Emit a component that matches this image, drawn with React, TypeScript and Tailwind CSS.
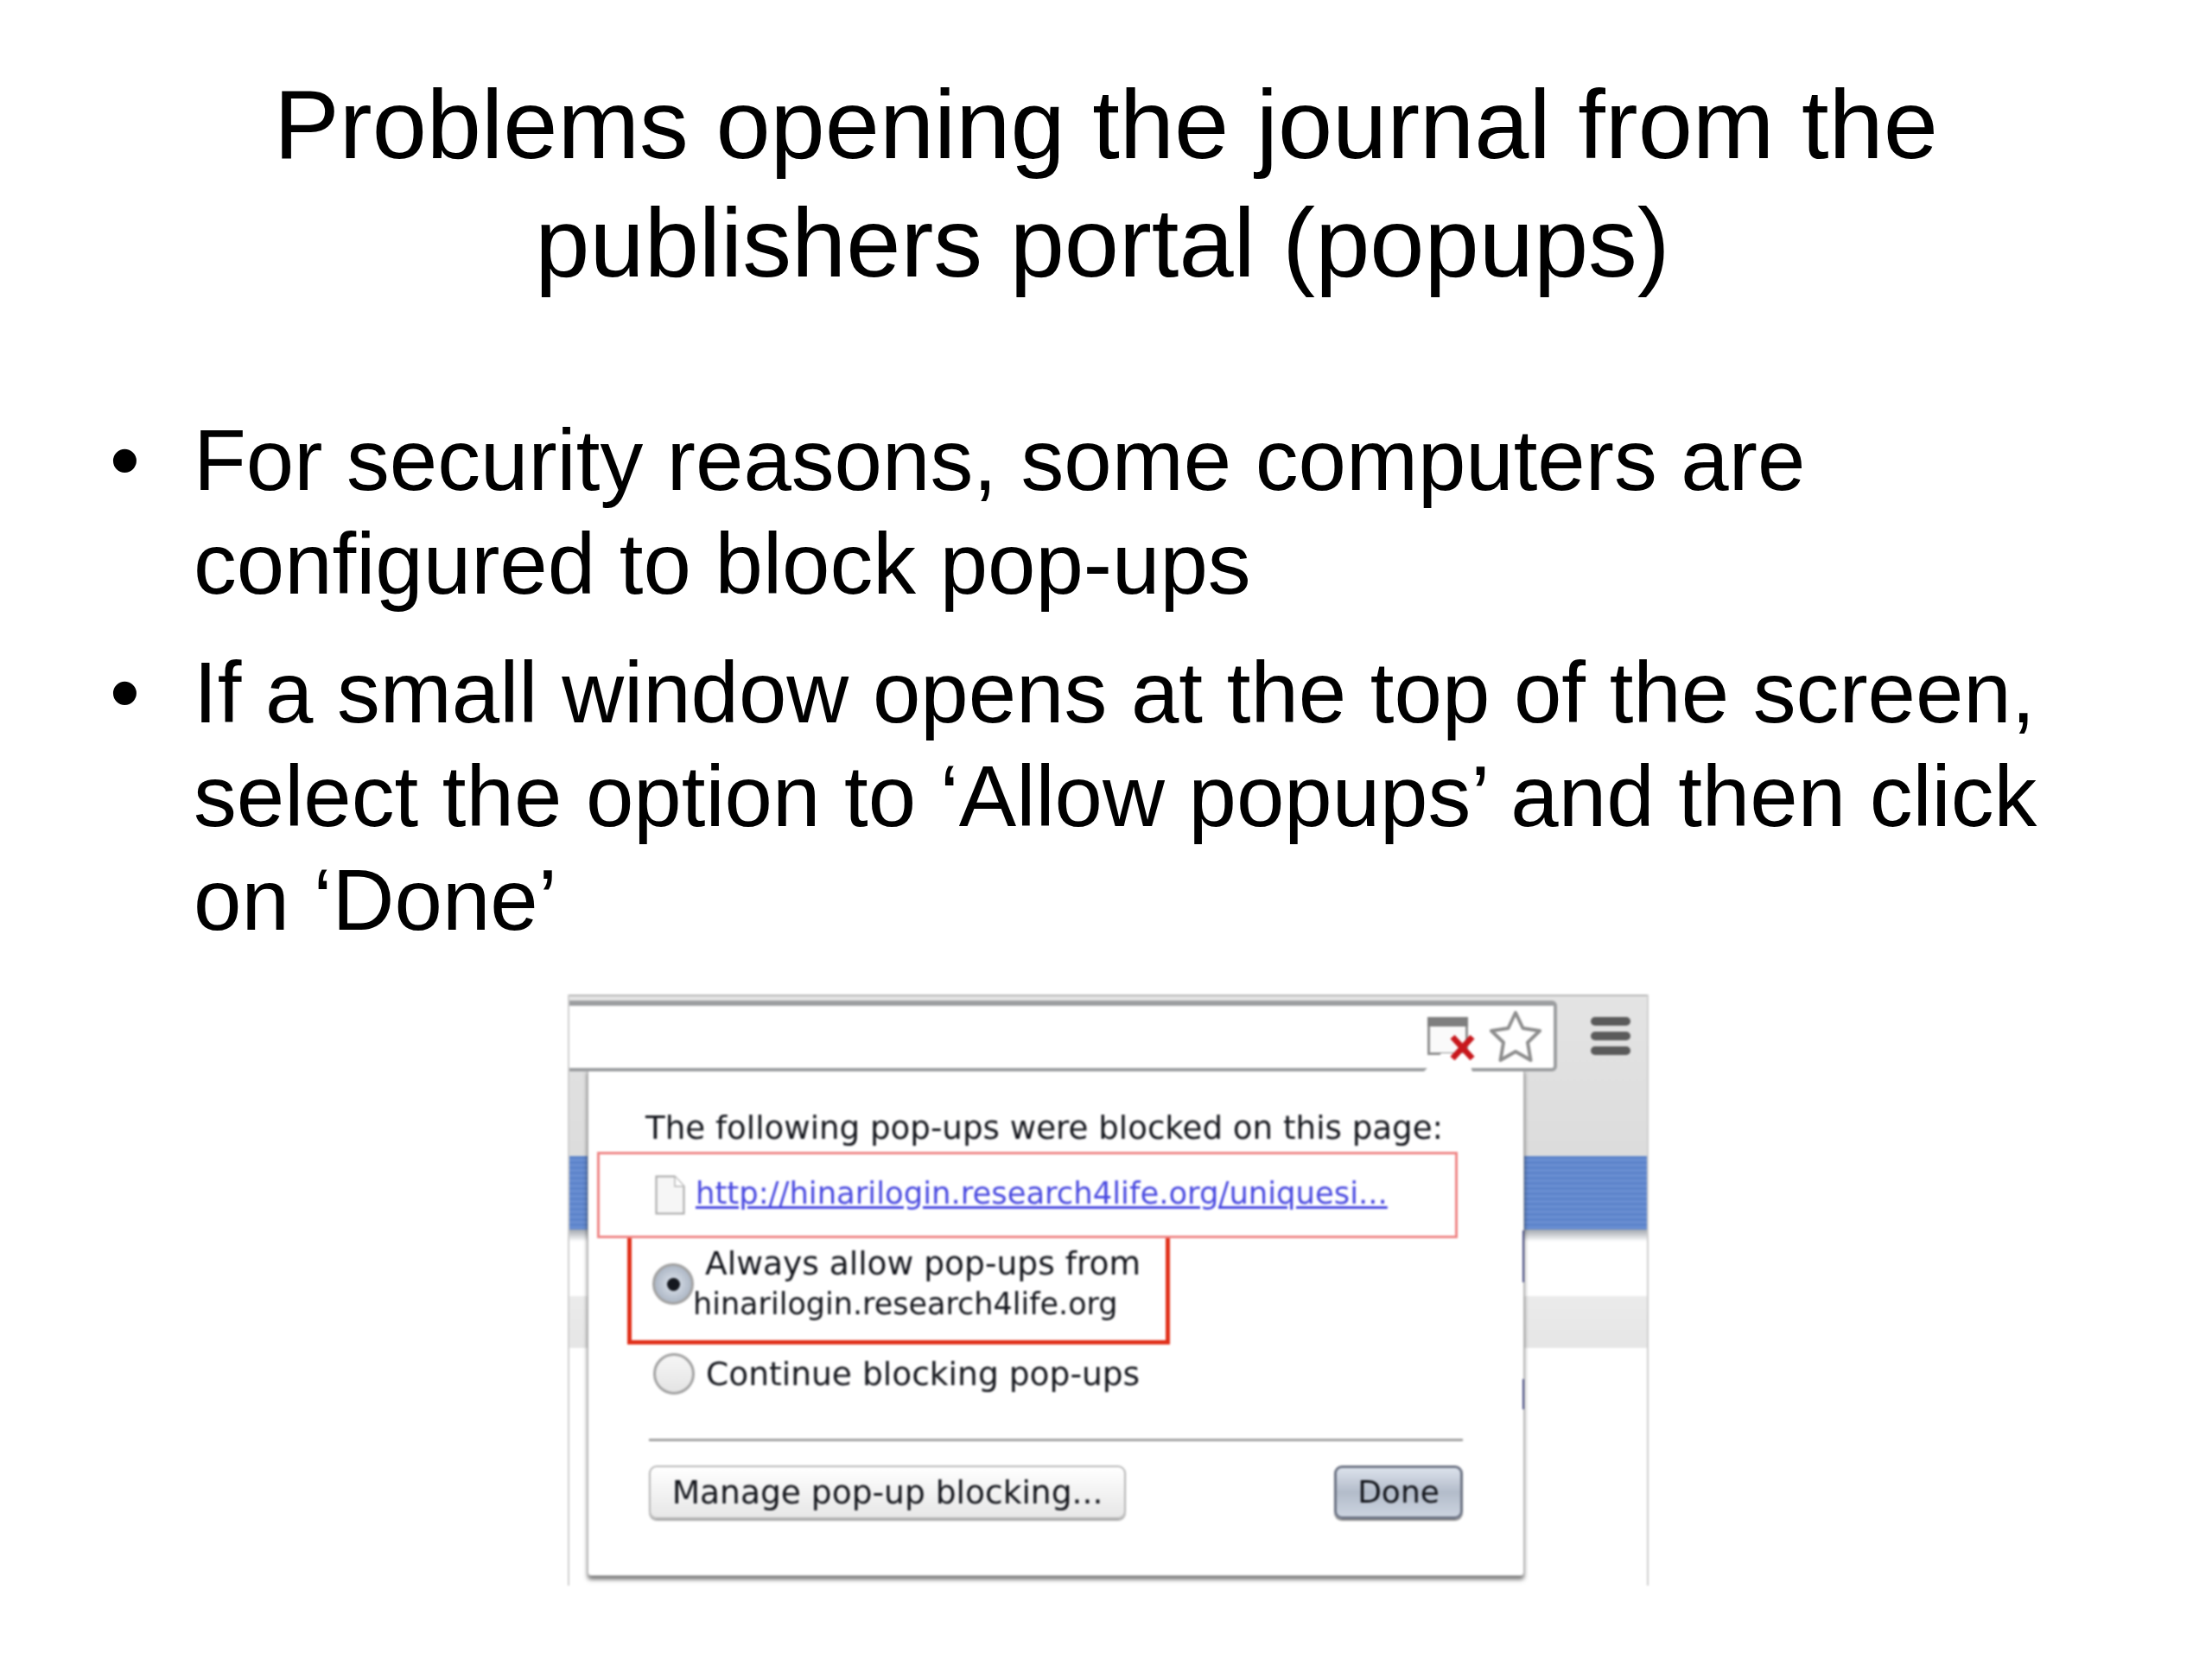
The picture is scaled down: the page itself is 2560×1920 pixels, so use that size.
const sans = 'font-["Liberation_Sans",Arial,sans-serif]';
const ui = 'font-["DejaVu_Sans",sans-serif]';

const BlockedIcon = () => (
  <svg width="47" height="44" viewBox="0 0 47 44" className="overflow-visible">
    <rect x="1.5" y="1.5" width="44" height="41" fill="#fafafa" stroke="#8f8f8f" strokeWidth="3" />
    <rect x="0" y="0" width="47" height="11" fill="#7f7f7f" />
    <polygon points="-4,63 16,42 44,42 52,63" fill="#ffffff" />
    <path d="M29 23 L52 48 M52 23 L29 48" stroke="#c8171c" strokeWidth="7" />
  </svg>
);

const StarIcon = () => (
  <svg width="60" height="60" viewBox="0 0 60 60" className="-mt-[7px]">
    <polygon
      points="30,2 38.5,20 58,23 44,36.5 47.5,57 30,47 12.5,57 16,36.5 2,23 21.5,20"
      fill="#ffffff"
      stroke="#8d8d8d"
      strokeWidth="4"
      strokeLinejoin="round"
    />
  </svg>
);

const DocIcon = () => (
  <svg width="35" height="46" viewBox="0 0 35 46" className="shrink-0">
    <path d="M1.5 1.5 H23 L33.5 13 V44.5 H1.5 Z" fill="#f6f6f6" stroke="#a8a8a8" strokeWidth="2" />
    <path d="M23 1.5 V13 H33.5" fill="#ffffff" stroke="#b8b8b8" strokeWidth="1.5" />
  </svg>
);

const Radio = ({ checked }: { checked?: boolean }) => (
  <div
    className={`w-[48px] h-[48px] rounded-full border-[3px] border-[#a3a3a3] shrink-0 flex items-center justify-center ${
      checked
        ? 'bg-[radial-gradient(circle,#dfe5ee_0%,#aeb8c6_70%,#8d97a6_100%)]'
        : 'bg-linear-to-b from-[#f6f6f6] to-[#e4e4e4]'
    }`}
  >
    {checked && <div className="w-[15px] h-[15px] rounded-full bg-[#15181f]" />}
  </div>
);

const Popup = () => (
  <div
    className={`absolute left-[21px] top-[86px] w-[1084px] h-[587px] bg-white border border-[#b5b5b5] rounded-b-[4px] shadow-[0_4px_5px_rgba(0,0,0,0.55)] px-[70px] pt-[47px] text-[#14161c] ${ui}`}
  >
    <div className="absolute -right-px top-[186px] w-[2px] h-[60px] bg-[#4a4f86]" />
    <div className="absolute -right-px top-[358px] w-[2px] h-[35px] bg-[#4a4f86]" />
    <div className="h-[40px] text-[37.2px] leading-[40px] -ml-[4px] whitespace-nowrap">
      The following pop-ups were blocked on this page:
    </div>
    <div className="relative z-10 mt-[8px] -ml-[60px] w-[996px] h-[100px] bg-white border-[3px] border-[#ef8686] flex items-center pl-[64px] pr-4 gap-[12px]">
      <DocIcon />
      <a className="-mt-[5px] text-[35.4px] leading-[40px] text-[#4a4ae0] underline underline-offset-[3px] whitespace-nowrap">
        http://hinarilogin.research4life.org/uniquesi...
      </a>
    </div>
    <div className="-mt-[5px] -ml-[25px] w-[628px] h-[128px] border-[5px] border-[#e1301a] flex items-center pl-[24px] pb-[12px]">
      <Radio checked />
      <div className="text-[37.6px] leading-[47px] whitespace-nowrap">
        <div className="pl-[13px]">Always allow pop-ups from</div>
        <div className="-ml-px text-[35px]">hinarilogin.research4life.org</div>
      </div>
    </div>
    <div className="mt-[10px] ml-[5px] h-[48px] flex items-center gap-[13px] text-[37.6px] whitespace-nowrap">
      <Radio />
      <span>Continue blocking pop-ups</span>
    </div>
    <div className="mt-[51px] h-[3px] bg-[#a2a2a2]" />
    <div className="mt-[28px] flex justify-between">
      <button className="w-[552px] h-[62px] rounded-[9px] border-2 border-[#b9b9b9] shadow-[0_2px_1px_#a8a8a8] bg-linear-to-b from-white to-[#e7e7e7] text-[37.6px] text-[#14161c] whitespace-nowrap">
        Manage pop-up blocking...
      </button>
      <button className="w-[149px] h-[62px] rounded-[9px] border-[3px] border-[#6f7686] shadow-[0_2px_1px_#8a8a8a] bg-linear-to-b from-[#dce2ec] via-[#b3bcca] to-[#ccd4e0] text-[36px] text-[#14161c]">
        Done
      </button>
    </div>
  </div>
);

const BrowserShot = () => (
  <div className="relative ml-[657px] mt-[49px] w-[1251px] h-[684px] border-x-2 border-[#cfcfcf] overflow-visible blur-[0.9px]">
    <div className="h-[187px] border-t-2 border-[#b8b8b8] bg-linear-to-b from-[#e4e4e4] to-[#dcdcdc] flex items-start">
      <div className="relative z-20 mt-[5px] w-[1143px] h-[82px] bg-white border-t-[6px] border-b-[4px] border-r-[4px] border-[#9c9ea0] rounded-r-[6px] flex items-start justify-end pt-[13px] pr-[14px] gap-[25px]">
        <BlockedIcon />
        <StarIcon />
      </div>
      <div className="mt-[24px] ml-[39px] w-[46px] flex flex-col gap-[7px]">
        <div className="h-[10px] rounded-full bg-[#5b5b5b]" />
        <div className="h-[10px] rounded-full bg-[#5b5b5b]" />
        <div className="h-[10px] rounded-full bg-[#5b5b5b]" />
      </div>
    </div>
    <div className="h-[85px] bg-[repeating-linear-gradient(180deg,#5c83ca_0px,#5c83ca_3px,#6a8fd2_3px,#6a8fd2_6px)]" />
    <div className="h-[77px] bg-linear-to-b from-[#a4a9b0] via-white via-[18%] to-white" />
    <div className="h-[60px] bg-linear-to-b from-[#ebebeb] to-[#e6e6e6]" />
    <div className="h-[275px] bg-white" />
    <Popup />
  </div>
);

export default function App() {
  return (
    <div className={`w-[2560px] h-[1920px] bg-white text-black overflow-hidden ${sans}`}>
      <h1 className="pt-[75px] text-center text-[113.6px] leading-[137px] font-normal blur-[0.5px]">
        Problems opening the journal from the
        <br />
        <span className="mr-[8px]">publishers portal (popups)</span>
      </h1>
      <ul className="mt-[124px] pl-[224px] text-[99.6px] leading-[120px] flex flex-col gap-[29px] blur-[0.5px]">
        <li className="relative">
          <span className="absolute -left-[97px] text-[99.6px]">•</span>
          For security reasons, some computers are
          <br />
          configured to block pop-ups
        </li>
        <li className="relative">
          <span className="absolute -left-[97px] text-[99.6px]">•</span>
          If a small window opens at the top of the screen,
          <br />
          select the option to ‘Allow popups’ and then click
          <br />
          on ‘Done’
        </li>
      </ul>
      <BrowserShot />
    </div>
  );
}
